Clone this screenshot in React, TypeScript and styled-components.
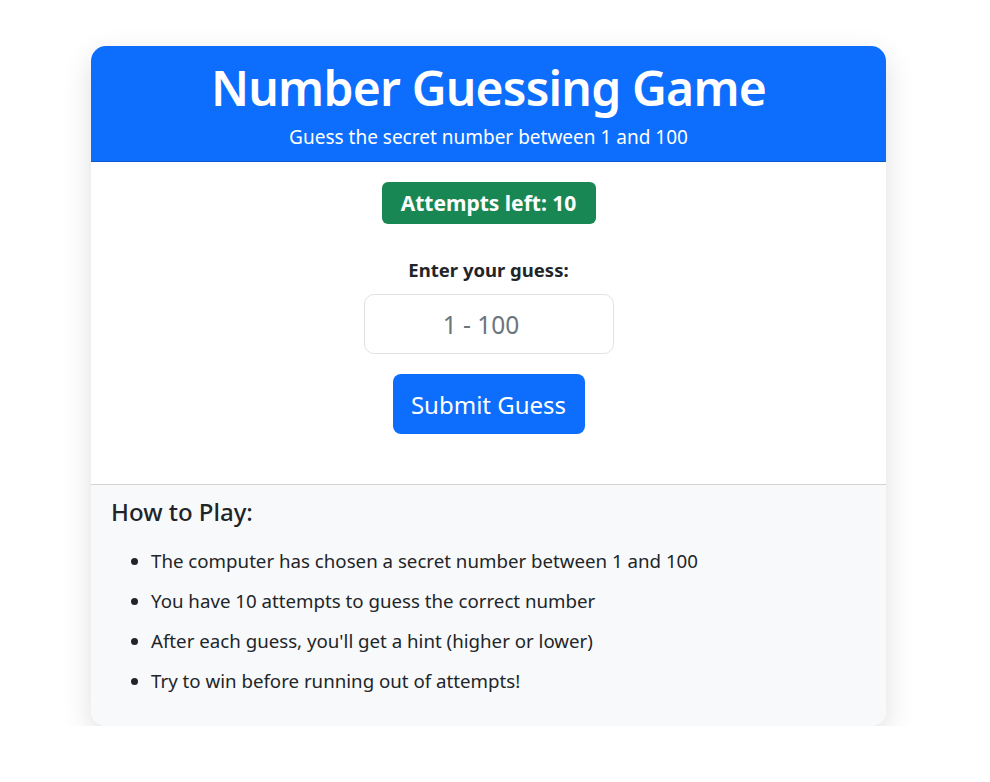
import React from "react";
import styled, { createGlobalStyle } from "styled-components";

const Global = createGlobalStyle`
  html, body { margin: 0; padding: 0; background: #fff; }
  body { font-family: "Noto Sans", "Open Sans", sans-serif; color: #212529; }
  * { box-sizing: border-box; }
`;

const Page = styled.div`
  padding: 46px 0 0 91px;
`;

const Card = styled.div`
  width: 795px;
  border-radius: 15px;
  overflow: hidden;
  box-shadow: 0 10px 30px rgba(0, 0, 0, 0.13);
  background: #fff;
`;

const Header = styled.div`
  background: #0d6efd;
  color: #fff;
  text-align: center;
  height: 116px;
  padding-top: 12px;
  border-bottom: 1px solid #0a58ca;
`;

const Title = styled.h1`
  margin: 0;
  font-size: 48px;
  font-weight: 600;
  line-height: 60px;
  letter-spacing: -0.8px;
`;

const Subtitle = styled.p`
  margin: 6px 0 0;
  font-size: 19px;
  line-height: 26px;
`;

const Body = styled.div`
  display: flex;
  flex-direction: column;
  align-items: center;
  padding: 20px 0 50px;
`;

const Badge = styled.div`
  background: #198754;
  color: #fff;
  font-weight: 700;
  font-size: 21px;
  width: 214px;
  height: 42px;
  border-radius: 6px;
  display: flex;
  align-items: center;
  justify-content: center;
`;

const Label = styled.label`
  margin-top: 34px;
  font-weight: 700;
  font-size: 18.5px;
  line-height: 24px;
`;

const Input = styled.input`
  margin-top: 12px;
  width: 250px;
  height: 60px;
  border: 1px solid #dee2e6;
  border-radius: 10px;
  font-family: inherit;
  font-size: 24.5px;
  text-align: center;
  color: #212529;
  outline: none;
  &::placeholder { color: #6c757d; }
`;

const Button = styled.button`
  margin-top: 20px;
  width: 192px;
  height: 60px;
  border: none;
  border-radius: 8px;
  background: #0d6efd;
  color: #fff;
  font-family: inherit;
  font-size: 24px;
`;

const Footer = styled.div`
  background: #f8f9fa;
  border-top: 1px solid #d3d3d3;
  padding: 12px 20px 33px;
`;

const FooterTitle = styled.h5`
  margin: 0;
  font-size: 24px;
  font-weight: 500;
  line-height: 30px;
`;

const List = styled.ul`
  margin: 22px 0 0;
  padding-left: 40px;
`;

const Item = styled.li`
  font-size: 18.7px;
  line-height: 24px;
  & + & { margin-top: 16px; }
`;

export default function App() {
  return (
    <>
      <Global />
      <Page>
        <Card>
          <Header>
            <Title>Number Guessing Game</Title>
            <Subtitle>Guess the secret number between 1 and 100</Subtitle>
          </Header>
          <Body>
            <Badge>Attempts left: 10</Badge>
            <Label htmlFor="guess">Enter your guess:</Label>
            <Input id="guess" type="number" placeholder="1 - 100" />
            <Button>Submit Guess</Button>
          </Body>
          <Footer>
            <FooterTitle>How to Play:</FooterTitle>
            <List>
              <Item>The computer has chosen a secret number between 1 and 100</Item>
              <Item>You have 10 attempts to guess the correct number</Item>
              <Item>After each guess, you'll get a hint (higher or lower)</Item>
              <Item>Try to win before running out of attempts!</Item>
            </List>
          </Footer>
        </Card>
      </Page>
    </>
  );
}
